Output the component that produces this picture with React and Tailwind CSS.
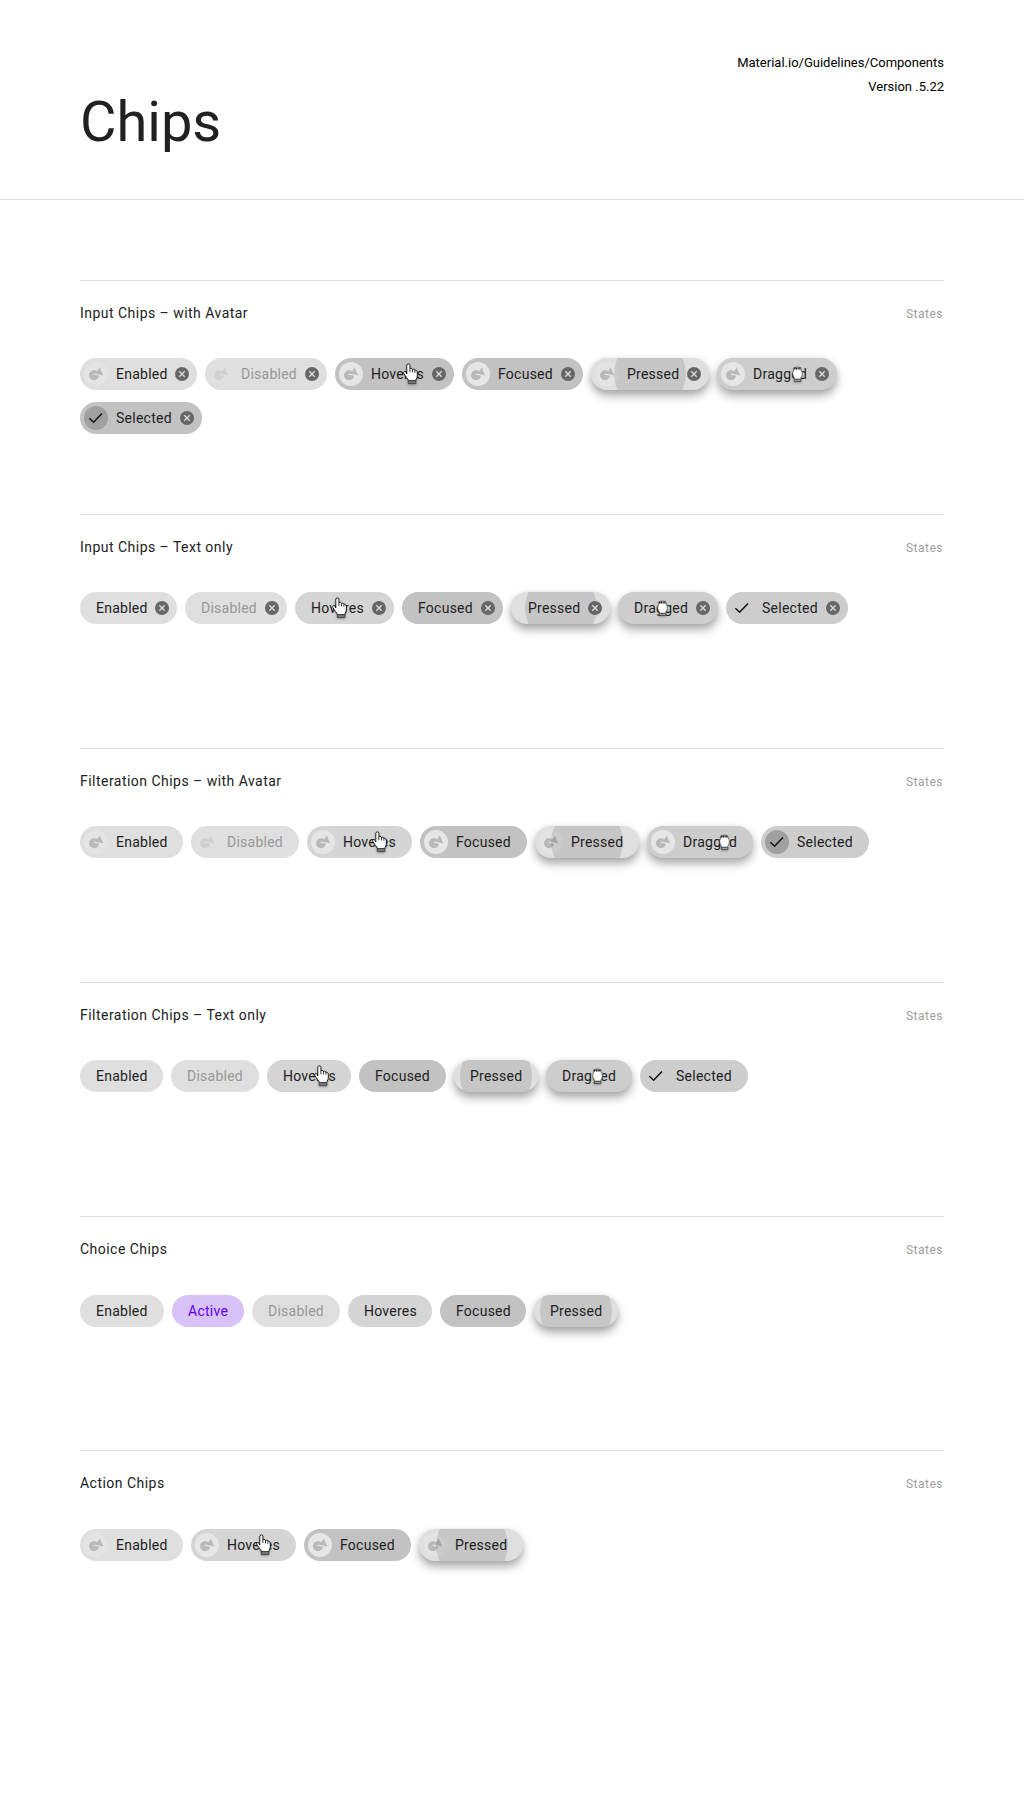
const tones = {
  base: 'bg-[#dfdfdf]',
  hover: 'bg-[#d5d5d5]',
  focus: 'bg-[#c2c2c2]',
  drag: 'bg-[#cdcdcd] shadow-[0_6px_10px_rgba(0,0,0,0.3),0_1px_6px_rgba(0,0,0,0.1)]',
  press: 'bg-[#dfdfdf] shadow-[0_6px_10px_rgba(0,0,0,0.3),0_1px_6px_rgba(0,0,0,0.1)]',
  selected: 'bg-[#cdcdcd]',
  active: 'bg-[#d7c3f8]',
};

const sections = [
  {
    title: 'Input Chips – with Avatar',
    avatar: true,
    remove: true,
    chips: [
      { label: 'Enabled', tone: 'base', w: 117 },
      { label: 'Disabled', tone: 'base', w: 122, disabled: true },
      { label: 'Hoveres', tone: 'focus', w: 119, bright: true, cursor: 'point', cx: 68, cy: 5 },
      { label: 'Focused', tone: 'focus', w: 121, bright: true },
      { label: 'Pressed', tone: 'press', w: 118, ripple: 23 },
      { label: 'Dragged', tone: 'drag', w: 120, bright: true, cursor: 'grab', cx: 75, cy: 8 },
      { label: 'Selected', tone: 'focus', w: 122, check: true },
    ],
  },
  {
    title: 'Input Chips – Text only',
    remove: true,
    chips: [
      { label: 'Enabled', tone: 'base', w: 97 },
      { label: 'Disabled', tone: 'base', w: 102, disabled: true },
      { label: 'Hoveres', tone: 'hover', w: 99, cursor: 'point', cx: 37, cy: 5 },
      { label: 'Focused', tone: 'focus', w: 101 },
      { label: 'Pressed', tone: 'press', w: 99, ripple: 14, nudge: true },
      { label: 'Dragged', tone: 'drag', w: 100, cursor: 'grab', cx: 39, cy: 8 },
      { label: 'Selected', tone: 'selected', w: 122, check: true },
    ],
  },
  {
    title: 'Filteration Chips – with Avatar',
    avatar: true,
    chips: [
      { label: 'Enabled', tone: 'base', w: 103 },
      { label: 'Disabled', tone: 'base', w: 108, disabled: true },
      { label: 'Hoveres', tone: 'hover', w: 105, bright: true, cursor: 'point', cx: 65, cy: 5 },
      { label: 'Focused', tone: 'focus', w: 107, bright: true },
      { label: 'Pressed', tone: 'press', w: 104, ripple: 16 },
      { label: 'Dragged', tone: 'drag', w: 106, bright: true, cursor: 'grab', cx: 72, cy: 8 },
      { label: 'Selected', tone: 'selected', w: 108, check: true },
    ],
  },
  {
    title: 'Filteration Chips – Text only',
    chips: [
      { label: 'Enabled', tone: 'base', w: 83 },
      { label: 'Disabled', tone: 'base', w: 88, disabled: true },
      { label: 'Hoveres', tone: 'hover', w: 84, cursor: 'point', cx: 47, cy: 5 },
      { label: 'Focused', tone: 'focus', w: 87 },
      { label: 'Pressed', tone: 'press', w: 84, ripple: 6 },
      { label: 'Dragged', tone: 'drag', w: 86, cursor: 'grab', cx: 46, cy: 8 },
      { label: 'Selected', tone: 'selected', w: 108, check: true },
    ],
  },
  {
    title: 'Choice Chips',
    low: true,
    chips: [
      { label: 'Enabled', tone: 'base', w: 84 },
      { label: 'Active', tone: 'active', w: 72 },
      { label: 'Disabled', tone: 'base', w: 88, disabled: true },
      { label: 'Hoveres', tone: 'hover', w: 84 },
      { label: 'Focused', tone: 'focus', w: 86 },
      { label: 'Pressed', tone: 'press', w: 84, ripple: 6 },
    ],
  },
  {
    title: 'Action Chips',
    avatar: true,
    low: true,
    chips: [
      { label: 'Enabled', tone: 'base', w: 103 },
      { label: 'Hoveres', tone: 'hover', w: 105, bright: true, cursor: 'point', cx: 65, cy: 5 },
      { label: 'Focused', tone: 'focus', w: 107, bright: true },
      { label: 'Pressed', tone: 'press', w: 104, ripple: 17 },
    ],
  },
];

function Avatar({ bright, disabled }) {
  const surface = disabled ? '#e0e0e0' : bright ? '#e6e6e6' : '#e4e4e4';
  const shape = disabled ? '#d0d0d0' : '#b9b9b9';
  return (
    <svg viewBox="0 0 24 24" className="h-6 w-6 shrink-0">
      <circle cx="12" cy="12" r="12" fill={surface} />
      <circle cx="10" cy="13.3" r="5" fill={shape} />
      <path d="M15.8 5.6 19.2 13.4 11.6 11.4Z" fill={shape} />
      <path d="M9.8 12.4 13 12.6 15.6 13.2" fill="none" stroke={surface} strokeWidth="1.1" />
    </svg>
  );
}

function Check({ filled }) {
  return (
    <span className={`h-6 w-6 shrink-0 rounded-full ${filled ? 'bg-[#a0a0a0]' : ''}`}>
      <svg viewBox="0 0 24 24" className="h-6 w-6" fill="none" stroke="#111" strokeWidth="1.5">
        <path d="M5.4 12.3 9.6 16.3 18 7.6" />
      </svg>
    </span>
  );
}

function RemoveIcon() {
  return (
    <svg viewBox="0 0 14 14" className="h-3.5 w-3.5 shrink-0">
      <circle cx="7" cy="7" r="7" fill="#666" />
      <path d="M4.3 4.3 9.7 9.7M9.7 4.3 4.3 9.7" stroke="#dedede" strokeWidth="1.3" />
    </svg>
  );
}

function PointCursor() {
  return (
    <svg viewBox="0 0 15 22" className="h-[22px] w-[15px] drop-shadow-[0_1px_1px_rgba(0,0,0,0.3)]">
      <path
        d="M3.8 11V2.4Q3.9.9 5.4.9T6.9 2.4V5.8Q7.2 5.2 8.2 5.4T9.5 6.5Q9.9 6 10.8 6.2T11.9 7.4Q12.3 7 13.2 7.4T14.3 9V13Q14.2 14.8 12.9 16.8V17.7H5.3V16.9Q3.6 14.5 2.3 12.7L.8 10.4Q.4 9.1 1.3 8.7T3.2 9.4Z"
        fill="#fff" stroke="#000" strokeWidth=".85"
      />
      <path d="M6.9 5.8V9.2M9.5 6.5V9.4M11.9 7.4V9.8" stroke="#000" strokeWidth=".8" fill="none" />
      <path d="M5.2 17.6H12.9V20.6H5.2Z" fill="#777" stroke="#333" strokeWidth=".7" />
    </svg>
  );
}

function GrabCursor() {
  return (
    <svg viewBox="0 0 11 17" className="h-[17px] w-[11px] drop-shadow-[0_1px_1px_rgba(0,0,0,0.25)]">
      <path
        d="M1.7 5V2.2Q2.2 1.2 3.3 1.5Q4.2.7 5.3 1.2Q6.4.7 7.3 1.4Q8.7 1.2 9 2.6V4.6L10.2 5.4V8.6Q9.9 10.8 8.8 12V13.3H2.4V12Q1 10 .8 8.2V6Z"
        fill="#fff" stroke="#555" strokeWidth=".7"
      />
      <path d="M1.8 2.6H9" stroke="#222" strokeWidth="2" strokeDasharray="1.4 .4" />
      <path d="M2.3 13.3H8.9V15.6H2.3Z" fill="#999" stroke="#444" strokeWidth=".8" />
    </svg>
  );
}

function Chip({ chip, avatar, remove }) {
  const lead = avatar || chip.check;
  const press = chip.ripple !== undefined;
  const color = chip.disabled ? 'text-[#989898]' : chip.tone === 'active' ? 'text-[#6200ee]' : 'text-[#212121]';
  return (
    <div
      className={`relative flex h-8 shrink-0 items-center rounded-full ${tones[chip.tone]} ${lead ? 'pl-1' : chip.nudge ? 'pl-[17px]' : 'pl-4'}`}
      style={{ width: chip.w }}
    >
      {chip.check ? <Check filled={avatar} /> : avatar && <Avatar bright={chip.bright} disabled={chip.disabled} />}
      {press && (
        <span className="absolute inset-0 overflow-hidden rounded-full">
          <span
            className="absolute -top-5 h-[72px] w-[72px] rounded-full bg-black/[0.11]"
            style={{ left: chip.ripple }}
          />
        </span>
      )}
      <span className={`relative text-sm leading-8 tracking-[0.25px] whitespace-nowrap ${color} ${lead ? 'ml-2' : ''}`}>{chip.label}</span>
      {remove && (
        <span className="relative mr-2 ml-auto">
          <RemoveIcon />
        </span>
      )}
      {chip.cursor && (
        <span className="absolute" style={{ left: chip.cx, top: chip.cy }}>
          {chip.cursor === 'point' ? <PointCursor /> : <GrabCursor />}
        </span>
      )}
    </div>
  );
}

export default function App() {
  return (
    <main className="min-h-[1800px] w-[1024px] bg-white font-[Roboto,sans-serif] text-[#212121]">
      <header className="flex h-[200px] justify-between border-b border-[#dfdfdf] px-20">
        <h1 className="mt-[89px] text-[56px] leading-[66px] font-normal">Chips</h1>
        <p className="mt-[51px] text-right text-[13px] leading-6 text-black">
          Material.io/Guidelines/Components
          <br />
          Version .5.22
        </p>
      </header>
      <div className="px-20 pt-20">
        {sections.map((s) => (
          <section key={s.title} className="h-[234px] border-t border-[#dfdfdf]">
            <div className="flex justify-between pt-5">
              <h2 className="text-sm leading-6 font-normal tracking-[0.47px]">{s.title}</h2>
              <span className="mt-px mr-px text-xs leading-6 tracking-[0.5px] text-[#9e9e9e]">States</span>
            </div>
            <div className={`flex w-[800px] flex-wrap gap-x-2 gap-y-3 ${s.low ? 'mt-[33px]' : 'mt-8'}`}>
              {s.chips.map((c) => (
                <Chip key={c.label} chip={c} avatar={s.avatar} remove={s.remove} />
              ))}
            </div>
          </section>
        ))}
      </div>
    </main>
  );
}
